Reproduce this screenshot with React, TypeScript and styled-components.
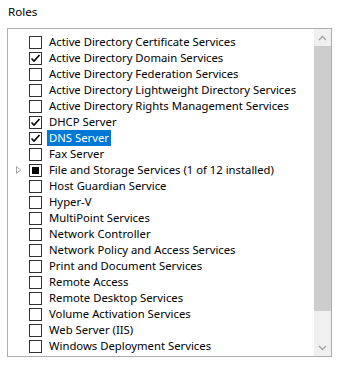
import styled, { createGlobalStyle } from 'styled-components';

const GlobalStyle = createGlobalStyle`
  body {
    margin: 0;
    background: #ffffff;
    font-family: "Noto Sans", "Open Sans", sans-serif;
    font-size: 11.3px;
    color: #000000;
  }
`;

const Page = styled.div`
  width: 345px;
  height: 373px;
  padding: 4px 13px 0 7px;
  box-sizing: border-box;
`;

const Heading = styled.div`
  height: 24px;
  padding-left: 1px;
  line-height: 16px;
  font-size: 11.6px;
`;

const ListBox = styled.div`
  display: flex;
  height: 329px;
  border: 1px solid #adadad;
  box-sizing: border-box;
`;

const List = styled.ul`
  flex: 1;
  margin: 0;
  padding: 5px 0 0 0;
  list-style: none;
  overflow: hidden;
`;

const Row = styled.li`
  display: flex;
  align-items: center;
  height: 16px;
`;

const Expander = styled.span`
  display: flex;
  align-items: center;
  justify-content: flex-start;
  width: 21px;
  padding-left: 8px;
  box-sizing: border-box;
`;

const Box = styled.span`
  display: flex;
  align-items: center;
  justify-content: center;
  width: 13px;
  height: 13px;
  border: 1px solid #333333;
  box-sizing: border-box;
  background: #ffffff;
`;

const Fill = styled.span`
  width: 7px;
  height: 7px;
  background: #000000;
`;

const Label = styled.span<{ $selected?: boolean }>`
  margin-left: 5px;
  padding: 0 2px;
  line-height: 16px;
  white-space: nowrap;
  background: ${(p) => (p.$selected ? '#0078d7' : 'transparent')};
  color: ${(p) => (p.$selected ? '#ffffff' : '#000000')};
`;

const Scrollbar = styled.div`
  display: flex;
  flex-direction: column;
  width: 17px;
  background: #f0f0f0;
`;

const Arrow = styled.div`
  display: flex;
  align-items: center;
  justify-content: center;
  height: 17px;
`;

const Thumb = styled.div`
  height: 265px;
  background: #cdcdcd;
`;

const Track = styled.div`
  flex: 1;
`;

type Role = { name: string; state?: 'checked' | 'partial'; expandable?: boolean; selected?: boolean };

const roles: Role[] = [
  { name: 'Active Directory Certificate Services' },
  { name: 'Active Directory Domain Services', state: 'checked' },
  { name: 'Active Directory Federation Services' },
  { name: 'Active Directory Lightweight Directory Services' },
  { name: 'Active Directory Rights Management Services' },
  { name: 'DHCP Server', state: 'checked' },
  { name: 'DNS Server', state: 'checked', selected: true },
  { name: 'Fax Server' },
  { name: 'File and Storage Services (1 of 12 installed)', state: 'partial', expandable: true },
  { name: 'Host Guardian Service' },
  { name: 'Hyper-V' },
  { name: 'MultiPoint Services' },
  { name: 'Network Controller' },
  { name: 'Network Policy and Access Services' },
  { name: 'Print and Document Services' },
  { name: 'Remote Access' },
  { name: 'Remote Desktop Services' },
  { name: 'Volume Activation Services' },
  { name: 'Web Server (IIS)' },
  { name: 'Windows Deployment Services' },
];

const Check = () => (
  <svg width="11" height="11" viewBox="0 0 11 11">
    <path d="M1.5 5.5 L4 8 L9.5 2" fill="none" stroke="#000" strokeWidth="1.6" />
  </svg>
);

const Triangle = () => (
  <svg width="6" height="8" viewBox="0 0 6 8">
    <path d="M0.5 0.5 L4.5 4 L0.5 7.5 Z" fill="none" stroke="#a6a6a6" strokeWidth="1" />
  </svg>
);

const Chevron = ({ up }: { up?: boolean }) => (
  <svg width="9" height="6" viewBox="0 0 9 6">
    <path d={up ? 'M1 5 L4.5 1.5 L8 5' : 'M1 1 L4.5 4.5 L8 1'} fill="none" stroke="#a0a0a0" strokeWidth="1.3" />
  </svg>
);

export default function App() {
  return (
    <>
      <GlobalStyle />
      <Page>
        <Heading>Roles</Heading>
        <ListBox>
          <List>
            {roles.map((r) => (
              <Row key={r.name}>
                <Expander>{r.expandable && <Triangle />}</Expander>
                <Box>
                  {r.state === 'checked' && <Check />}
                  {r.state === 'partial' && <Fill />}
                </Box>
                <Label $selected={r.selected}>{r.name}</Label>
              </Row>
            ))}
          </List>
          <Scrollbar>
            <Arrow>
              <Chevron up />
            </Arrow>
            <Thumb />
            <Track />
            <Arrow>
              <Chevron />
            </Arrow>
          </Scrollbar>
        </ListBox>
      </Page>
    </>
  );
}
